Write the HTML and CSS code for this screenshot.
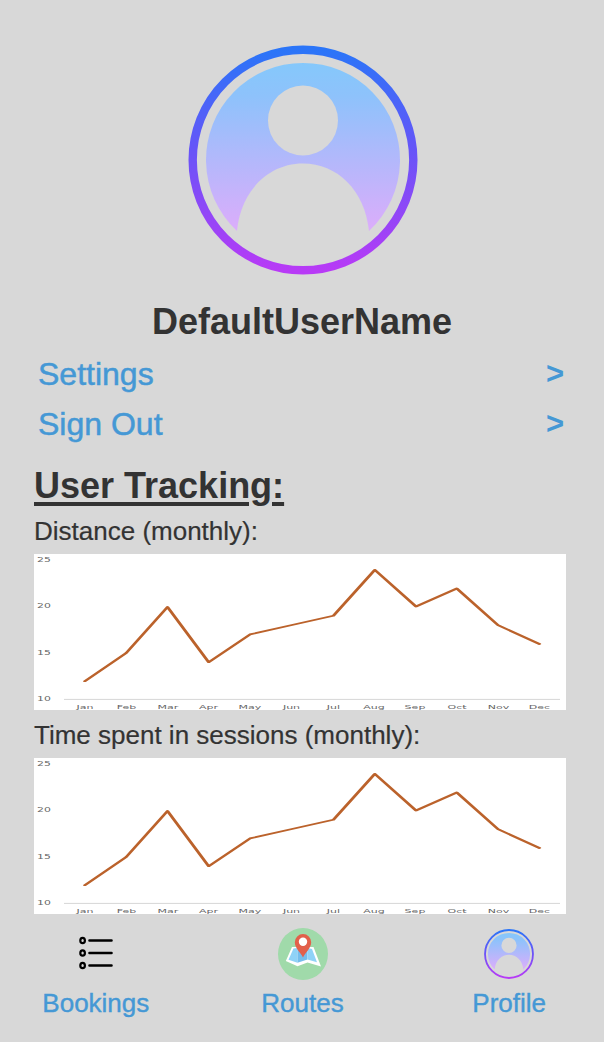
FILE: index.html
```html
<!DOCTYPE html>
<html lang="en">
<head>
<meta charset="utf-8">
<title>Profile</title>
<link rel="stylesheet" href="styles.css">
</head>
<body>
<svg class="defs" width="0" height="0" aria-hidden="true">
  <defs>
    <linearGradient id="ring" x1="0" y1="0" x2="0" y2="1"><stop offset="0" stop-color="#2b75f8"/><stop offset=".45" stop-color="#6655f8"/><stop offset="1" stop-color="#b83af6"/></linearGradient>
    <linearGradient id="disc" x1="0" y1="0" x2="0" y2="1"><stop offset="0" stop-color="#85c8fb"/><stop offset=".2" stop-color="#8ec2fb"/><stop offset="1" stop-color="#dcadfb"/></linearGradient>
    <symbol id="avatar" viewBox="0 0 230 230">
      <circle cx="115" cy="115" r="110.300" fill="none" stroke="url(#ring)" stroke-width="8.400"/>
      <path fill="url(#disc)" fill-rule="evenodd" d="M49 186A97 97 0 1 1 181 186C177 145 149 118.500 115 118.500S53 145 49 186ZM80 75.500a35 35 0 1 0 70 0a35 35 0 1 0-70 0Z"/>
    </symbol>
    <symbol id="chart" viewBox="0 0 532 156">
      <path d="M30 145.400H526" stroke="#d6d6d6" stroke-width="1"/>
      <path transform="scale(2 1)" d="M25.400 127.200 46.100 99 66.750 53 87.350 108.200 108 80.400 129 71 149.650 61.800 170.400 15.800 191 52.500 211.400 34.500 232 71.200 252.700 90" fill="none" stroke="#bb622b" stroke-width="1.700" stroke-linejoin="round" stroke-linecap="round"/>
      <g class="tick">
        <text transform="translate(3 8) scale(1.75 1)">25</text>
        <text transform="translate(3 54.200) scale(1.75 1)">20</text>
        <text transform="translate(3 100.500) scale(1.75 1)">15</text>
        <text transform="translate(3 147) scale(1.75 1)">10</text>
      </g>
      <g class="tick tick-month">
        <text transform="translate(51 154.600) scale(1.900 1)">Jan</text>
        <text transform="translate(92.400 154.600) scale(1.900 1)">Feb</text>
        <text transform="translate(134 154.600) scale(1.900 1)">Mar</text>
        <text transform="translate(174.500 154.600) scale(1.900 1)">Apr</text>
        <text transform="translate(216 154.600) scale(1.900 1)">May</text>
        <text transform="translate(257.500 154.600) scale(1.900 1)">Jun</text>
        <text transform="translate(299.500 154.600) scale(1.900 1)">Jul</text>
        <text transform="translate(340 154.600) scale(1.900 1)">Aug</text>
        <text transform="translate(381 154.600) scale(1.900 1)">Sep</text>
        <text transform="translate(423 154.600) scale(1.900 1)">Oct</text>
        <text transform="translate(464.500 154.600) scale(1.900 1)">Nov</text>
        <text transform="translate(505.500 154.600) scale(1.900 1)">Dec</text>
      </g>
    </symbol>
  </defs>
</svg>
<main class="page">
  <header class="profile">
    <svg class="avatar" width="230" height="230"><use href="#avatar"/></svg>
    <h1 class="name">DefaultUserName</h1>
  </header>
  <nav class="links">
    <a class="row"><span>Settings</span><span class="arrow">&gt;</span></a>
    <a class="row"><span>Sign Out</span><span class="arrow">&gt;</span></a>
  </nav>
  <section class="tracking">
    <h2 class="heading">User Tracking:</h2>
    <p class="label">Distance (monthly):</p>
    <svg class="chart" width="532" height="156"><use href="#chart"/></svg>
    <p class="label">Time spent in sessions (monthly):</p>
    <svg class="chart" width="532" height="156"><use href="#chart"/></svg>
  </section>
  <nav class="tabs">
    <a class="tab">
      <svg class="icon" width="52" height="52" viewBox="0 0 52 52" fill="none" stroke="#000">
        <g stroke-width="2.200"><ellipse cx="12.600" cy="12.500" rx="2.300" ry="2.700"/><ellipse cx="12.600" cy="25" rx="2.300" ry="2.700"/><ellipse cx="12.600" cy="37.500" rx="2.300" ry="2.700"/></g>
        <path d="M19.500 12.500H41.500M19.500 25H41.500M19.500 37.500H41.500" stroke-width="2.600" stroke-linecap="round"/>
      </svg>
      <span>Bookings</span>
    </a>
    <a class="tab">
      <svg class="icon icon-map" width="52" height="52" viewBox="0 0 52 52">
        <ellipse cx="26" cy="26" rx="25" ry="26" fill="#a0daaa"/>
        <path d="M15 19 36.500 19 44 38.500 30.500 34.500 20.500 38.300 8.800 33Z" fill="#fff"/>
        <path d="M16.500 20.500 20.500 20V34.800L11.500 31.800Z" fill="#8fd2f7"/>
        <path d="M20.500 20H30.500V31.500L20.500 34.800Z" fill="#74bdec"/>
        <path d="M30.500 20 35 21 40 34.300 30.500 31.500Z" fill="#8fd2f7"/>
        <path d="M26 29.500C24 25 17.800 20 17.800 14.200A8.200 8.200 0 0 1 34.200 14.200C34.200 20 28 25 26 29.500Z" fill="#e2604b"/>
        <circle cx="26" cy="13.800" r="4.200" fill="#fff"/>
      </svg>
      <span>Routes</span>
    </a>
    <a class="tab">
      <svg class="icon" width="52" height="52"><use href="#avatar" x="1" y="1" width="50" height="50"/></svg>
      <span>Profile</span>
    </a>
  </nav>
</main>
</body>
</html>
```
FILE: styles.css
```css
* { box-sizing: border-box; }
body { margin: 0; background: #d8d8d8; font-family: "Liberation Sans", Arial, sans-serif; color: #333; }
.defs { display: block; }
.page { width: 604px; height: 1042px; overflow: hidden; }
.profile { display: flex; flex-direction: column; align-items: center; padding: 45px 0 0 2px; }
.avatar { display: block; filter: blur(.7px); }
.name { margin: 27px 2px 0 0; font-size: 36px; line-height: 40px; }
.links { padding: 7px 40px 0 38px; color: #4598d5; font-size: 32px; -webkit-text-stroke: .5px #4598d5; }
.row { display: flex; justify-content: space-between; line-height: 50px; }
.arrow { font-weight: bold; font-size: 31px; line-height: 49px; -webkit-text-stroke: 0; }
.tracking { padding: 17px 38px 0 34px; }
.heading { margin: 0 0 10px; font-size: 36px; line-height: 40px; text-decoration: underline 4px; text-underline-offset: 4px; }
.label { margin: 0 0 8px; font-size: 26px; line-height: 30px; -webkit-text-stroke: .2px #333; }
.chart { display: block; background: #fff; margin-bottom: 10px; }
.tick { font: 6.2px "DejaVu Sans", sans-serif; fill: #666; }
.tick-month { font-size: 5.8px; text-anchor: middle; }
.tabs { display: grid; grid-template-columns: repeat(3, 206.7px); justify-content: center; padding: 4px 0 0 1px; color: #4598d5; font-size: 26px; line-height: 30px; -webkit-text-stroke: .4px #4598d5; }
.tab { display: flex; flex-direction: column; align-items: center; gap: 8px; }
.icon { display: block; -webkit-text-stroke: 0; }
.icon-map { margin-left: 1px; }
```
